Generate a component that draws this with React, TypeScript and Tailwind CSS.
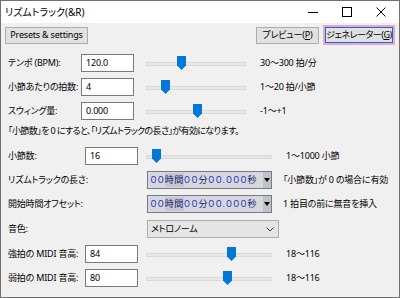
import React from "react";

const font = "[font-family:'Noto_Sans','Noto_Sans_CJK_JP',sans-serif] [font-feature-settings:'palt'] whitespace-nowrap";

function Thumb({ left }: { left: number }) {
  return (
    <svg
      className="absolute top-[5px]"
      style={{ left }}
      width="9"
      height="14"
      viewBox="0 0 9 14"
    >
      <path d="M0 0H9V9.5L4.5 14L0 9.5Z" fill="#0078d7" />
    </svg>
  );
}

function Slider({ width, thumb }: { width: number; thumb: number }) {
  return (
    <div className="relative h-[24px] shrink-0" style={{ width }}>
      <div className="absolute left-0 right-0 top-[11px] h-[4px] bg-[#e7e7e7] border border-[#dadada]" />
      <Thumb left={thumb} />
    </div>
  );
}

function Input({ value }: { value: string }) {
  return (
    <div className="w-[53px] h-[18px] shrink-0 bg-white border border-[#7a7a7a] flex items-center pl-[4px] text-black">
      {value}
    </div>
  );
}

function TimeCtrl() {
  return (
    <div className="w-[125px] h-[18px] shrink-0 flex items-stretch border border-[#7a7a7a] bg-[#d6d8e0]">
      <div className="flex-1 flex items-center pl-[2px] text-[9px] tracking-[0.5px] text-[#2a2ab8] overflow-hidden">
        <span>００</span>
        <span className="text-[#1a1a6a] bg-[#c3c7d6]">時間</span>
        <span>００</span>
        <span className="text-[#1a1a6a]">分</span>
        <span>００.０００</span>
        <span className="text-[#1a1a6a]">秒</span>
      </div>
      <div className="w-[8px] flex items-center justify-center bg-[#c0c0c8]">
        <svg width="6" height="4" viewBox="0 0 6 4">
          <path d="M0 0H6L3 4Z" fill="#000" />
        </svg>
      </div>
    </div>
  );
}

export default function App() {
  return (
    <div className={`w-[400px] h-[298px] flex flex-col bg-[#f0f0f0] border border-[#707070] text-black text-[9px] tracking-[-0.2px] ${font}`}>
      {/* title bar */}
      <div className="h-[22px] bg-white flex items-center relative shrink-0">
        <span className="ml-[4px] text-[10px] tracking-normal">リズムトラック(&amp;R)</span>
        <div className="ml-auto flex items-center h-full">
          <div className="w-[34px] h-full flex items-center justify-center">
            <svg width="10" height="10" viewBox="0 0 10 10">
              <path d="M0 5.5H10" stroke="#000" strokeWidth="1" />
            </svg>
          </div>
          <div className="w-[34px] h-full flex items-center justify-center">
            <svg width="10" height="10" viewBox="0 0 10 10">
              <rect x="0.5" y="0.5" width="9" height="9" fill="none" stroke="#000" strokeWidth="1" />
            </svg>
          </div>
          <div className="w-[34px] h-full flex items-center justify-center mr-[1px]">
            <svg width="10" height="10" viewBox="0 0 10 10">
              <path d="M0.5 0.5L9.5 9.5M9.5 0.5L0.5 9.5" stroke="#000" strokeWidth="1" />
            </svg>
          </div>
        </div>
      </div>

      {/* button row */}
      <div className="mt-[2px] h-[20px] flex items-center pl-[4px] pr-[4px] shrink-0">
        <div className="w-[83px] h-[17px] bg-[#e1e1e1] border border-[#adadad] flex items-center justify-center">
          Presets &amp; settings
        </div>
        <div className="ml-auto w-[63px] h-[17px] bg-[#e1e1e1] border border-[#adadad] flex items-center justify-center">
          プレビュー(<u>P</u>)
        </div>
        <div className="ml-[4px] w-[72px] h-[20px] border-2 border-[#f2a3c7] flex">
          <div className="flex-1 bg-[#e1e1e1] border border-[#0078d7] flex items-center justify-center tracking-[-0.5px]">
            ジェネレーター(<u>G</u>)
          </div>
        </div>
      </div>

      {/* top group */}
      <div className="mt-[6px] h-[24px] flex items-center pl-[7px]">
        <div className="w-[73px]">テンポ (BPM):</div>
        <Input value="120.0" />
        <div className="ml-[12px]"><Slider width={100} thumb={31} /></div>
        <div className="ml-[14px]">30〜300 拍/分</div>
      </div>
      <div className="h-[24px] flex items-center pl-[7px]">
        <div className="w-[73px]">小節あたりの拍数:</div>
        <Input value="4" />
        <div className="ml-[12px]"><Slider width={100} thumb={15} /></div>
        <div className="ml-[14px]">1〜20 拍/小節</div>
      </div>
      <div className="h-[24px] flex items-center pl-[7px]">
        <div className="w-[73px]">スウィング量:</div>
        <Input value="0.000" />
        <div className="ml-[12px]"><Slider width={100} thumb={47} /></div>
        <div className="ml-[14px]">-1〜+1</div>
      </div>
      <div className="h-[16px] flex items-center pl-[7px] tracking-[-0.6px]">
        「小節数」を 0 にすると、「リズムトラックの長さ」が有効になります。
      </div>

      {/* second group */}
      <div className="mt-[5px] h-[24px] flex items-center pl-[7px]">
        <div className="w-[77px]">小節数:</div>
        <Input value="16" />
        <div className="ml-[8px]"><Slider width={126} thumb={6} /></div>
        <div className="ml-[14px]">1〜1000 小節</div>
      </div>
      <div className="h-[24px] flex items-center pl-[7px]">
        <div className="w-[139px]">リズムトラックの長さ:</div>
        <TimeCtrl />
        <div className="ml-[11px]">「小節数」が 0 の場合に有効</div>
      </div>
      <div className="h-[24px] flex items-center pl-[7px]">
        <div className="w-[139px]">開始時間オフセット:</div>
        <TimeCtrl />
        <div className="ml-[11px]">1 拍目の前に無音を挿入</div>
      </div>
      <div className="mt-[1px] h-[24px] flex items-center pl-[7px]">
        <div className="w-[139px]">音色:</div>
        <div className="w-[132px] h-[18px] bg-[#e5e5e5] border border-[#adadad] flex items-center pl-[3px] pr-[4px]">
          <span>メトロノーム</span>
          <svg className="ml-auto" width="8" height="5" viewBox="0 0 8 5">
            <path d="M0.5 0.5L4 4L7.5 0.5" fill="none" stroke="#333" strokeWidth="1" />
          </svg>
        </div>
      </div>
      <div className="mt-[1px] h-[24px] flex items-center pl-[7px]">
        <div className="w-[77px]">強拍の MIDI 音高:</div>
        <Input value="84" />
        <div className="ml-[8px]"><Slider width={126} thumb={81} /></div>
        <div className="ml-[14px]">18〜116</div>
      </div>
      <div className="h-[24px] flex items-center pl-[7px]">
        <div className="w-[77px]">弱拍の MIDI 音高:</div>
        <Input value="80" />
        <div className="ml-[8px]"><Slider width={126} thumb={77} /></div>
        <div className="ml-[14px]">18〜116</div>
      </div>
    </div>
  );
}
